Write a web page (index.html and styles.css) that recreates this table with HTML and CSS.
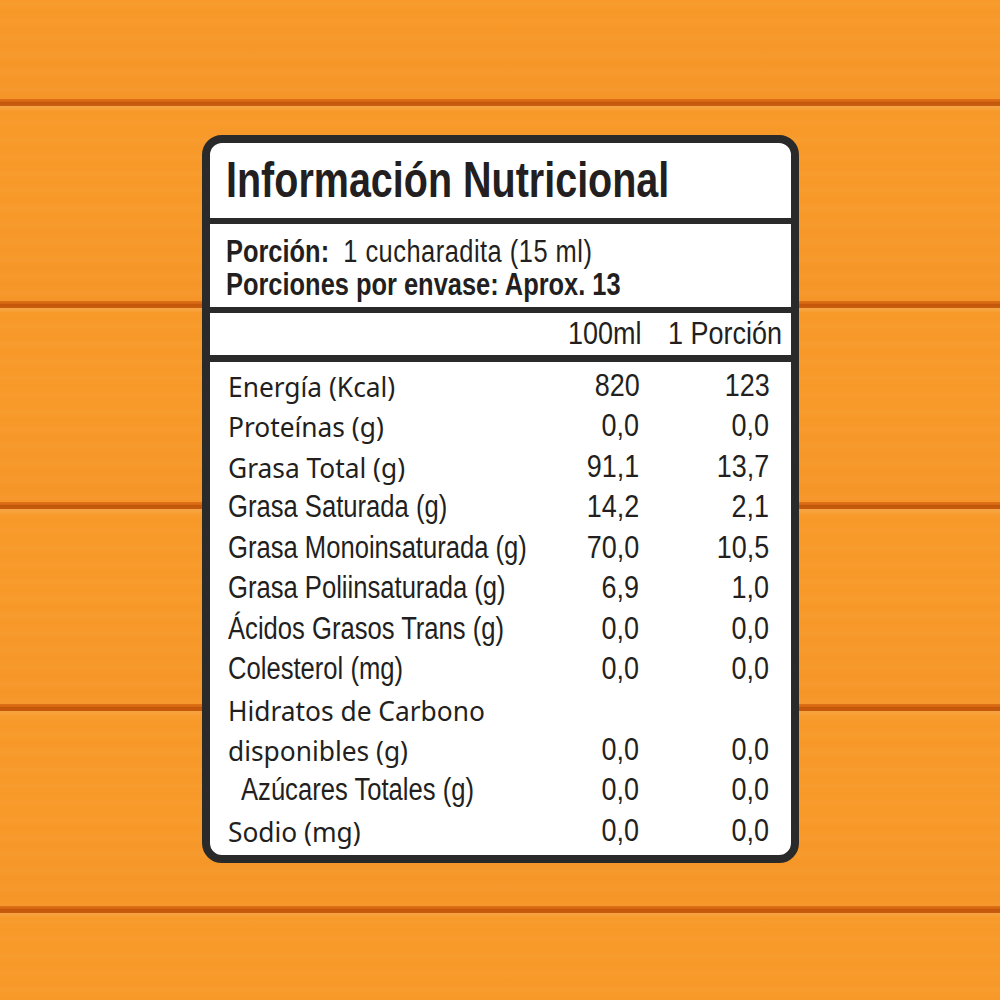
FILE: index.html
```html
<!DOCTYPE html>
<html lang="es">
<head>
<meta charset="utf-8">
<title>Información Nutricional</title>
<link rel="stylesheet" href="styles.css">
</head>
<body>
<div class="card">
  <div class="title"><span class="sq">Información Nutricional</span></div>
  <div class="serving">
    <div class="line"><span class="sq"><b>Porción:</b>&nbsp; <span class="light">1 cucharadita (15 ml)</span></span></div>
    <div class="line"><span class="sq"><b>Porciones por envase: Aprox. 13</b></span></div>
  </div>
  <div class="head">
    <span></span><span class="num"><span class="sqr">100ml</span></span><span class="num"><span class="sqr">1 Porción</span></span>
  </div>
  <div class="rows">
    <div class="row"><span class="lab my"><span class="sq">Energía (Kcal)</span></span><span class="num"><span class="sqr">820</span></span><span class="num"><span class="sqr">123</span></span></div>
    <div class="row"><span class="lab my"><span class="sq">Proteínas (g)</span></span><span class="num"><span class="sqr">0,0</span></span><span class="num"><span class="sqr">0,0</span></span></div>
    <div class="row"><span class="lab my"><span class="sq">Grasa Total (g)</span></span><span class="num"><span class="sqr">91,1</span></span><span class="num"><span class="sqr">13,7</span></span></div>
    <div class="row"><span class="lab hc"><span class="sq">Grasa Saturada (g)</span></span><span class="num"><span class="sqr">14,2</span></span><span class="num"><span class="sqr">2,1</span></span></div>
    <div class="row"><span class="lab hc"><span class="sq">Grasa Monoinsaturada (g)</span></span><span class="num"><span class="sqr">70,0</span></span><span class="num"><span class="sqr">10,5</span></span></div>
    <div class="row"><span class="lab hc"><span class="sq">Grasa Poliinsaturada (g)</span></span><span class="num"><span class="sqr">6,9</span></span><span class="num"><span class="sqr">1,0</span></span></div>
    <div class="row"><span class="lab hc"><span class="sq">Ácidos Grasos Trans (g)</span></span><span class="num"><span class="sqr">0,0</span></span><span class="num"><span class="sqr">0,0</span></span></div>
    <div class="row"><span class="lab hc"><span class="sq">Colesterol (mg)</span></span><span class="num"><span class="sqr">0,0</span></span><span class="num"><span class="sqr">0,0</span></span></div>
    <div class="row"><span class="lab my"><span class="sq">Hidratos de Carbono</span></span><span class="num"></span><span class="num"></span></div>
    <div class="row"><span class="lab my"><span class="sq">disponibles (g)</span></span><span class="num"><span class="sqr">0,0</span></span><span class="num"><span class="sqr">0,0</span></span></div>
    <div class="row"><span class="lab hc indent"><span class="sq">Azúcares Totales (g)</span></span><span class="num"><span class="sqr">0,0</span></span><span class="num"><span class="sqr">0,0</span></span></div>
    <div class="row"><span class="lab my"><span class="sq">Sodio (mg)</span></span><span class="num"><span class="sqr">0,0</span></span><span class="num"><span class="sqr">0,0</span></span></div>
  </div>
</div>
</body>
</html>
```
FILE: styles.css
```css
html, body {
  margin: 0;
  padding: 0;
}
body {
  width: 1000px;
  min-height: 1000px;
  overflow: hidden;
  font-family: "Liberation Sans", Arial, sans-serif;
  color: #231f20;
  background-color: #f89a2a;
  background-image:
    repeating-linear-gradient(to bottom,
      rgba(255,255,255,0) 0px, rgba(255,255,255,0.025) 4px, rgba(0,0,0,0) 8px, rgba(200,90,0,0.025) 12px, rgba(255,255,255,0) 17px),
    repeating-linear-gradient(to bottom,
      #f89a2a 0px,
      #f69629 99px,
      #de7016 99px,
      #d4650f 102px,
      #c2560a 102px,
      #c85b0c 106px,
      #f5a444 106px,
      #f8a035 109px,
      #f89a2a 111px,
      #f89a2a 201.7px);
  padding-top: 135px;
  box-sizing: border-box;
}
.card {
  width: 597px;
  margin: 0 auto;
  box-sizing: border-box;
  border: 8px solid #2a2a2a;
  border-radius: 20px;
  background: #ffffff;
  overflow: hidden;
}
.sq, .sqr {
  display: inline-block;
  white-space: nowrap;
}
.sq {
  transform-origin: left center;
}
.sqr {
  transform-origin: right center;
}
.title {
  font-weight: bold;
  font-size: 50px;
  line-height: 75px;
  height: 75px;
  padding-left: 16px;
  border-bottom: 6px solid #2a2a2a;
  white-space: nowrap;
}
.title .sq {
  transform: scaleX(0.79);
}
.serving {
  font-size: 31px;
  line-height: 33px;
  padding: 11px 0 6px 16px;
  height: 66px;
  border-bottom: 6px solid #2a2a2a;
}
.serving .line {
  height: 33px;
  white-space: nowrap;
}
.serving .sq {
  transform: scaleX(0.82);
}
.serving b {
  font-weight: bold;
}
.serving .light {
  letter-spacing: 0.6px;
}
.head {
  display: grid;
  grid-template-columns: minmax(0, 1fr) 110px 140px;
  height: 42px;
  font-size: 31px;
  line-height: 42px;
  padding-right: 9px;
  border-bottom: 7px solid #2a2a2a;
}
.head .sqr {
  transform: scaleX(0.86);
}
.rows {
  padding: 4px 21px 4px 18px;
}
.row {
  display: grid;
  grid-template-columns: minmax(0, 1fr) 110px 130px;
  line-height: 40.45px;
  height: 40.45px;
}
.lab {
  white-space: nowrap;
}
.lab.my {
  font-family: "Noto Sans", "Liberation Sans", sans-serif;
  font-size: 28px;
}
.lab.my .sq {
  transform: scaleX(0.94);
}
.lab.hc {
  font-family: "Liberation Sans", Arial, sans-serif;
  font-size: 31px;
}
.lab.hc .sq {
  transform: scaleX(0.826);
}
.num {
  text-align: right;
  font-family: "Liberation Sans", Arial, sans-serif;
  font-size: 31px;
  white-space: nowrap;
}
.num .sqr {
  transform: scaleX(0.87);
}
.indent {
  padding-left: 13px;
}
```
